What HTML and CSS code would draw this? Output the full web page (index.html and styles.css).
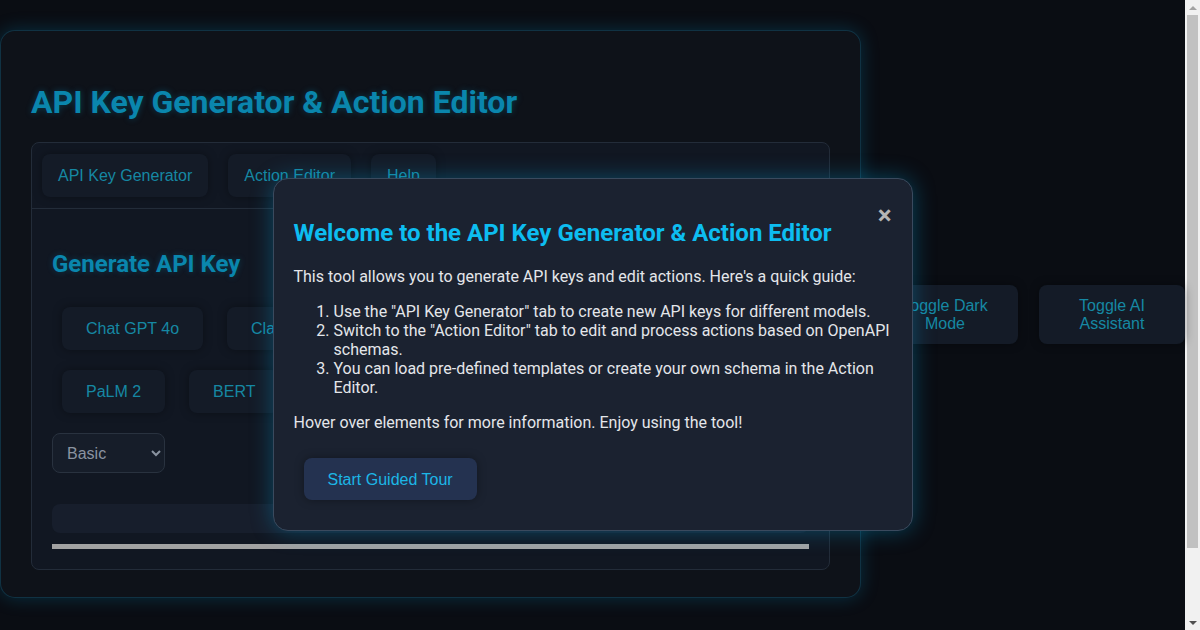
FILE: index.html
```html
<!DOCTYPE html>
<html lang="en">
<head>
<meta charset="utf-8">
<title>API Key Generator &amp; Action Editor</title>
<link rel="stylesheet" href="styles.css">
</head>
<body>
<div class="page">
  <div class="container">
    <h1 class="title">API Key Generator &amp; Action Editor</h1>
    <div class="tabs">
      <div class="tab-bar">
        <button class="btn tab active">API Key Generator</button>
        <button class="btn tab">Action Editor</button>
        <button class="btn tab">Help</button>
      </div>
      <div class="tab-content">
        <h2 class="section-title">Generate API Key</h2>
        <div class="models">
          <button class="btn model">Chat GPT 4o</button>
          <button class="btn model">Claude 3.5 Sonnet</button>
          <button class="btn model">Gemini 1.5 Pro</button>
          <button class="btn model">LLaMA 3</button>
          <button class="btn model">PaLM 2</button>
          <button class="btn model">BERT</button>
          <button class="btn model">Mistral Large</button>
        </div>
        <select class="tier">
          <option>Basic</option>
          <option>Advanced</option>
          <option>Premium</option>
        </select>
        <div class="key-output"></div>
        <div class="progress"></div>
      </div>
    </div>
  </div>
  <div class="controls">
    <button class="btn toggle">Toggle Dark Mode</button>
    <button class="btn toggle">Toggle AI Assistant</button>
  </div>

  <div class="overlay">
    <div class="modal">
      <span class="close">&times;</span>
      <h2 class="modal-title">Welcome to the API Key Generator &amp; Action Editor</h2>
      <p>This tool allows you to generate API keys and edit actions. Here's a quick guide:</p>
      <ol>
        <li>Use the "API Key Generator" tab to create new API keys for different models.</li>
        <li>Switch to the "Action Editor" tab to edit and process actions based on OpenAPI schemas.</li>
        <li>You can load pre-defined templates or create your own schema in the Action Editor.</li>
      </ol>
      <p>Hover over elements for more information. Enjoy using the tool!</p>
      <button class="btn tour">Start Guided Tour</button>
    </div>
  </div>
</div>
<div class="scrollbar" aria-hidden="true">
  <div class="sb-btn sb-up"></div>
  <div class="sb-track"><div class="sb-thumb"></div></div>
  <div class="sb-btn sb-down"></div>
</div>
</body>
</html>
```

FILE: styles.css
```css
body {
  margin: 0;
  background: #0a0d13;
  font-family: Roboto, "Liberation Sans", sans-serif;
  color: #e4e6ea;
  display: flex;
  align-items: flex-start;
}

.page {
  position: relative;
  box-sizing: border-box;
  width: 1185px;
  height: 709px;
  flex-shrink: 0;
  padding-top: 30px;
  display: flex;
  align-items: flex-start;
}

/* classic scrollbar strip */
.scrollbar {
  width: 15px;
  height: 630px;
  flex-shrink: 0;
  background: #f1f1f1;
  display: flex;
  flex-direction: column;
}

.sb-btn {
  height: 15px;
  display: flex;
  align-items: center;
  justify-content: center;
}

.sb-up::before {
  content: "";
  border-left: 4px solid transparent;
  border-right: 4px solid transparent;
  border-bottom: 4px solid #a3a3a3;
}

.sb-down::before {
  content: "";
  border-left: 4px solid transparent;
  border-right: 4px solid transparent;
  border-top: 4px solid #505050;
}

.sb-track {
  flex: 1;
  padding: 0 2px;
}

.sb-thumb {
  height: 533px;
  background: #c1c1c1;
}

.container {
  box-sizing: border-box;
  width: 861px;
  height: 568px;
  flex-shrink: 0;
  padding: 0 30px;
  background: #0e1219;
  border: 1px solid rgba(20, 90, 120, 0.45);
  border-radius: 15px;
  box-shadow: 0 0 18px rgba(0, 140, 190, 0.28);
  display: flex;
  flex-direction: column;
}

.title {
  margin: 53px 0 0;
  height: 58px;
  font-size: 32px;
  font-weight: 700;
  line-height: 37px;
  color: #0a86ad;
  text-shadow: 0 0 6px rgba(0, 140, 190, 0.35);
}

.tabs {
  background: #111722;
  border: 1px solid #232c39;
  border-radius: 8px;
}

.tab-bar {
  display: flex;
  gap: 20px;
  padding: 11px 10px 11px 10px;
  border-bottom: 1px solid #232c39;
}

.btn {
  font-family: "Liberation Sans", Arial, sans-serif;
  font-size: 16px;
  line-height: 19px;
  border: none;
  border-radius: 8px;
  background: #141b27;
  color: #1688a3;
  padding: 12px 16px;
  box-shadow: 0 0 10px rgba(0, 0, 0, 0.35);
  cursor: pointer;
}

.tab {
  height: 43px;
}

.tab-content {
  padding: 20px;
}

.section-title {
  margin: 21px 0 19px;
  font-size: 24px;
  font-weight: 700;
  line-height: 28px;
  color: #0a86ad;
  text-shadow: 0 0 6px rgba(0, 140, 190, 0.3);
}

.model {
  margin: 10px;
  padding: 12px 24px;
  height: 43px;
}

.tier {
  display: block;
  width: 113px;
  margin: 10px 0 0;
  height: 40px;
  padding: 0 10px;
  font-family: "Liberation Sans", Arial, sans-serif;
  font-size: 16px;
  color: #8a93a0;
  background: #161d29;
  border: 1px solid #29323f;
  border-radius: 8px;
}

.key-output {
  margin-top: 31px;
  height: 29px;
  background: #171e2c;
  border-radius: 8px;
}

.progress {
  margin-top: 11px;
  height: 5px;
  background: #a2a2a2;
}

.controls {
  display: flex;
  gap: 21px;
  margin-left: 11px;
  margin-top: 255px;
}

.toggle {
  width: 146px;
  height: 59px;
  padding: 12px 24px;
  line-height: 18px;
}

.overlay {
  position: absolute;
  inset: 0;
  display: flex;
  align-items: center;
  justify-content: center;
}

.modal {
  position: relative;
  box-sizing: border-box;
  width: 640px;
  padding: 20px;
  background: #1b2230;
  border: 1px solid #3a4a5e;
  border-radius: 15px;
  box-shadow: 0 0 22px rgba(0, 170, 230, 0.35);
  font-size: 16px;
  line-height: 19px;
}

.close {
  position: absolute;
  top: 21px;
  right: 20px;
  font-size: 26px;
  line-height: 30px;
  font-weight: 700;
  color: #b4b4b4;
}

.modal-title {
  margin: 20px 0 20px;
  font-size: 24px;
  line-height: 28px;
  font-weight: 700;
  color: #0dbdf0;
}

.modal p {
  margin: 16px 0;
}

.modal ol {
  margin: 16px 0;
  padding-left: 40px;
}

.tour {
  margin: 10px;
  padding: 12px 24px;
  height: 42px;
  background: #243250;
  color: #1cb6e6;
}
```
